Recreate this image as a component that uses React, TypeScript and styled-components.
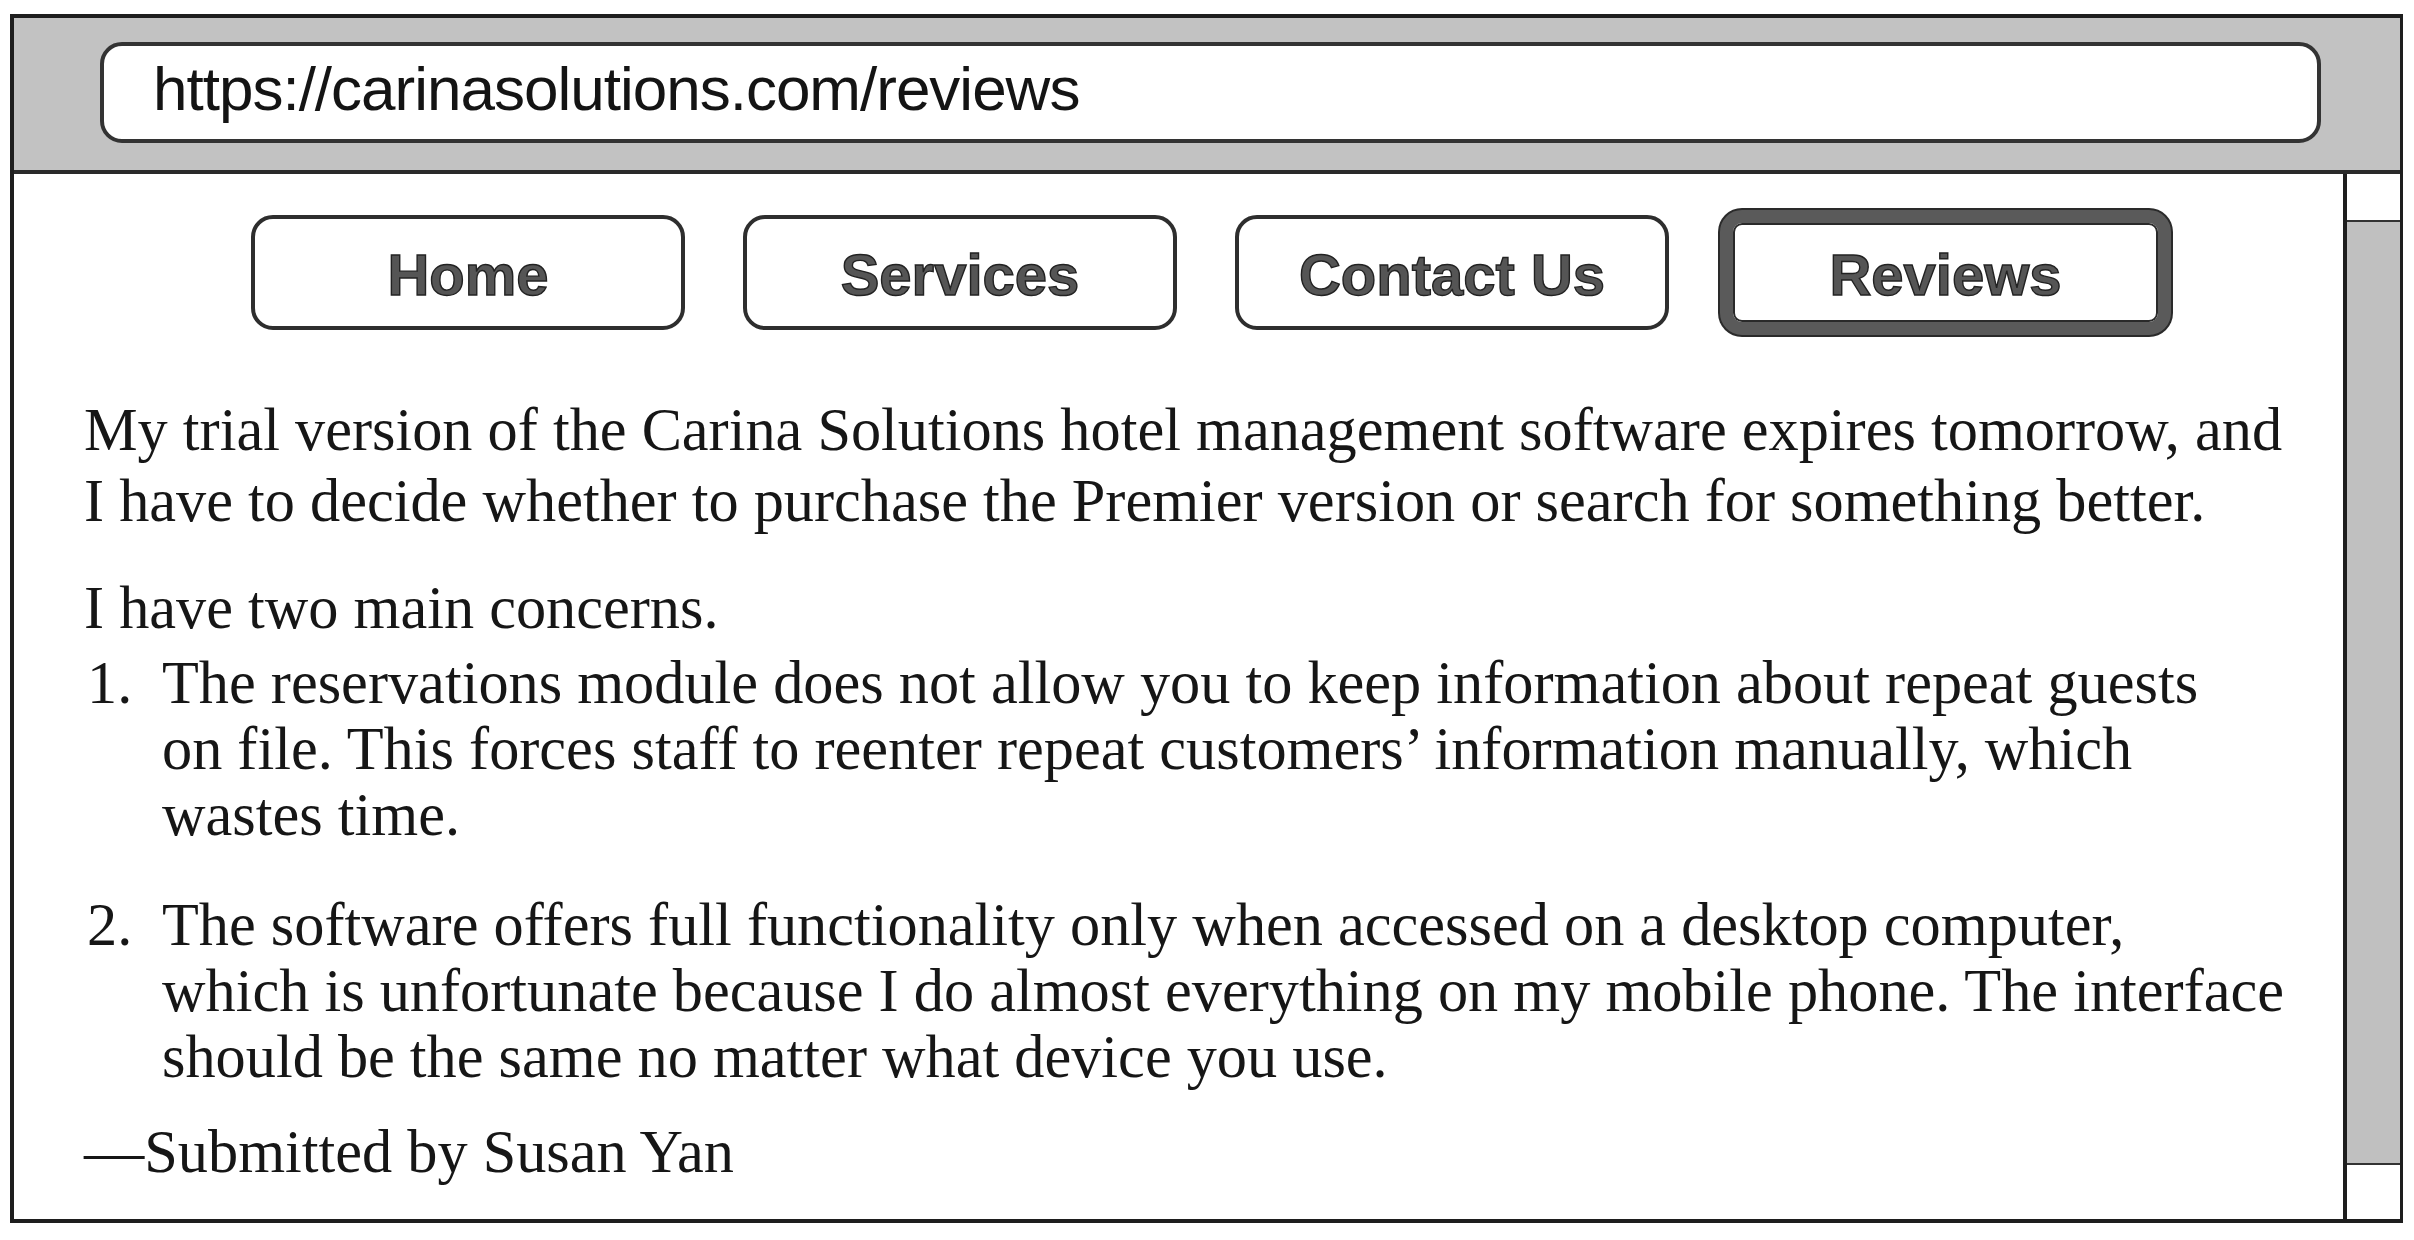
import styled, { createGlobalStyle } from "styled-components";

const GlobalStyle = createGlobalStyle`
  html, body {
    margin: 0;
    padding: 0;
    background: #ffffff;
  }
  * {
    box-sizing: border-box;
  }
`;

const Frame = styled.div`
  margin: 14px 0 0 10px;
  width: 2393px;
  height: 1209px;
  border: 4px solid #1e1e1e;
  border-right-width: 3px;
  display: flex;
  flex-direction: column;
  background: #ffffff;
`;

const AddressBar = styled.div`
  height: 156px;
  flex-shrink: 0;
  background: #c2c2c2;
  border-bottom: 4px solid #2a2a2a;
  padding: 24px 79px 0 86px;
`;

const UrlBox = styled.div`
  height: 101px;
  border: 4px solid #333333;
  border-radius: 22px;
  background: #ffffff;
  display: flex;
  align-items: center;
  padding: 0 0 8px 49px;
  font-family: "Liberation Sans", Arial, sans-serif;
  font-size: 62px;
  letter-spacing: -1px;
  color: #141414;
`;

const Body = styled.div`
  flex: 1;
  display: flex;
  min-height: 0;
`;

const Content = styled.main`
  flex: 1;
  padding: 36px 30px 0 70px;
  font-family: "Liberation Serif", "Times New Roman", serif;
  font-size: 60.3px;
  color: #161616;
`;

const Nav = styled.nav`
  display: flex;
  align-items: center;
  gap: 58px;
  padding-left: 167px;
  margin-bottom: 59px;
`;

const NavButton = styled.div<{ $active?: boolean }>`
  width: ${(p) => (p.$active ? "451px" : "434px")};
  height: ${(p) => (p.$active ? "125px" : "115px")};
  margin-left: ${(p) => (p.$active ? "-7px" : "0")};
  border: ${(p) => (p.$active ? "13px solid #5a5a5a" : "4px solid #2e2e2e")};
  border-radius: 22px;
  box-shadow: ${(p) =>
    p.$active ? "0 0 0 2px #2a2a2a, inset 0 0 0 2px #2a2a2a" : "none"};
  background: #ffffff;
  display: flex;
  align-items: center;
  justify-content: center;
  padding-top: 4px;
  font-family: "Liberation Sans", Arial, sans-serif;
  font-weight: 700;
  font-size: 58px;
  color: #555555;
  -webkit-text-stroke: 1.4px #222222;
`;

const Paragraph = styled.p<{ $gap?: number }>`
  margin: ${(p) => p.$gap ?? 0}px 0 0;
  line-height: 71px;
`;

const List = styled.ol`
  list-style: none;
  margin: 7px 0 0;
  padding: 0;
`;

const Item = styled.li<{ $gap?: number }>`
  display: grid;
  grid-template-columns: 78px 1fr;
  margin-top: ${(p) => p.$gap ?? 0}px;
  line-height: 66px;
`;

const Marker = styled.span`
  padding-left: 3px;
`;

const ScrollTrack = styled.div`
  width: 57px;
  flex-shrink: 0;
  border-left: 4px solid #1e1e1e;
  display: flex;
  flex-direction: column;
`;

const ScrollCap = styled.div<{ $bottom?: boolean }>`
  height: ${(p) => (p.$bottom ? "56px" : "48px")};
  background: #ffffff;
  border-top: ${(p) => (p.$bottom ? "2px solid #333" : "none")};
  border-bottom: ${(p) => (p.$bottom ? "none" : "2px solid #333")};
`;

const ScrollThumb = styled.div`
  flex: 1;
  background: #c0c0c0;
`;

const navItems = ["Home", "Services", "Contact Us", "Reviews"];

export default function App() {
  return (
    <>
      <GlobalStyle />
      <Frame>
        <AddressBar>
          <UrlBox>https://carinasolutions.com/reviews</UrlBox>
        </AddressBar>
        <Body>
          <Content>
            <Nav>
              {navItems.map((label) => (
                <NavButton key={label} $active={label === "Reviews"}>
                  {label}
                </NavButton>
              ))}
            </Nav>
            <Paragraph>
              My trial version of the Carina Solutions hotel management software expires tomorrow, and
              <br />
              I have to decide whether to purchase the Premier version or search for something better.
            </Paragraph>
            <Paragraph $gap={36}>I have two main concerns.</Paragraph>
            <List>
              <Item>
                <Marker>1.</Marker>
                <span>
                  The reservations module does not allow you to keep information about repeat guests
                  <br />
                  on file. This forces staff to reenter repeat customers’ information manually, which
                  <br />
                  wastes time.
                </span>
              </Item>
              <Item $gap={44}>
                <Marker>2.</Marker>
                <span>
                  The software offers full functionality only when accessed on a desktop computer,
                  <br />
                  which is unfortunate because I do almost everything on my mobile phone. The interface
                  <br />
                  should be the same no matter what device you use.
                </span>
              </Item>
            </List>
            <Paragraph $gap={26}>—Submitted by Susan Yan</Paragraph>
          </Content>
          <ScrollTrack>
            <ScrollCap />
            <ScrollThumb />
            <ScrollCap $bottom />
          </ScrollTrack>
        </Body>
      </Frame>
    </>
  );
}
